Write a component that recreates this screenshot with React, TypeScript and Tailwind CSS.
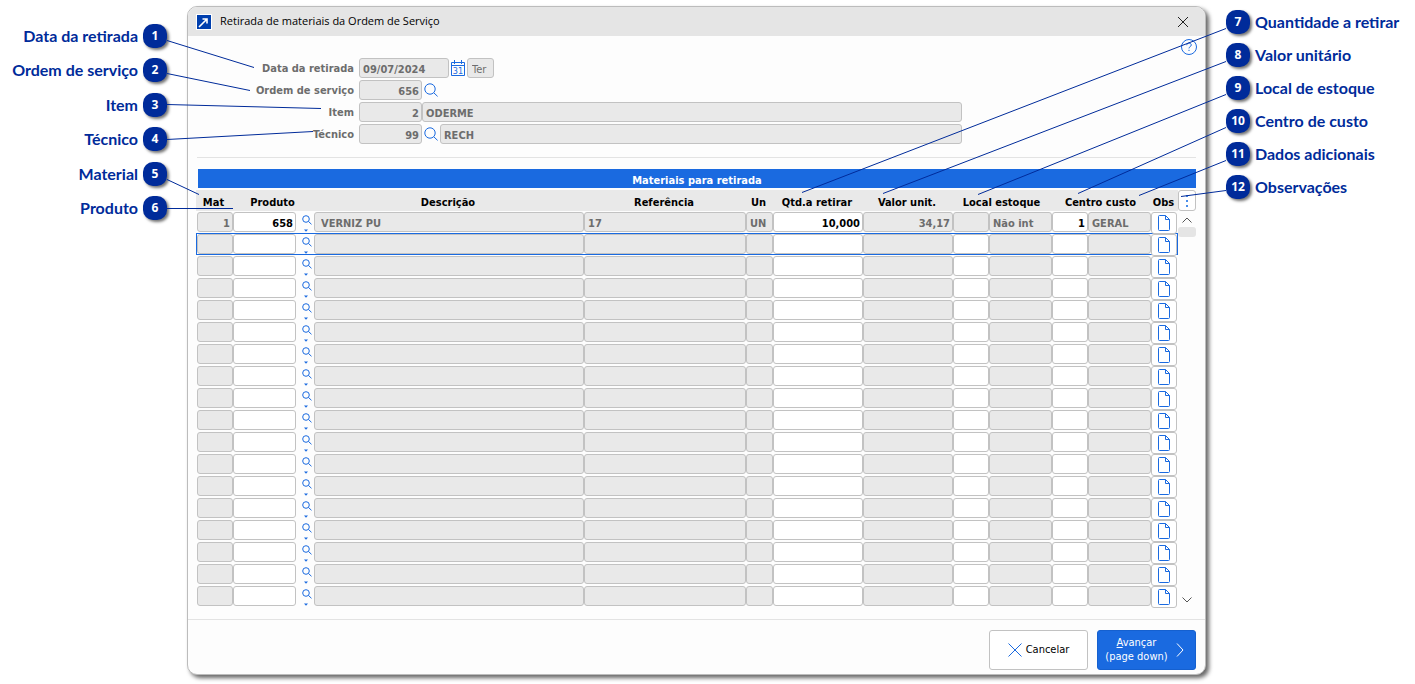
import { useState } from "react";
import clsx from "clsx";

type Align = "left" | "right";

interface Column {
  key: string;
  label: string;
  align: Align;
  readOnly: boolean;
}

interface Callout {
  n: number;
  label: string;
}

const COLUMNS: Column[] = [
  { key: "mat", label: "Mat", align: "right", readOnly: true },
  { key: "produto", label: "Produto", align: "right", readOnly: false },
  { key: "descricao", label: "Descrição", align: "left", readOnly: true },
  { key: "referencia", label: "Referência", align: "left", readOnly: true },
  { key: "un", label: "Un", align: "left", readOnly: true },
  { key: "qtd", label: "Qtd.a retirar", align: "right", readOnly: false },
  { key: "valor", label: "Valor unit.", align: "right", readOnly: true },
  { key: "local", label: "Local estoque", align: "right", readOnly: false },
  { key: "localNome", label: "Nome do local", align: "left", readOnly: true },
  { key: "centro", label: "Centro custo", align: "right", readOnly: false },
  { key: "centroNome", label: "Nome do centro", align: "left", readOnly: true },
];

const FIRST_ROW: Record<string, string> = {
  mat: "1",
  produto: "658",
  descricao: "VERNIZ PU",
  referencia: "17",
  un: "UN",
  qtd: "10,000",
  valor: "34,17",
  local: "",
  localNome: "Não int",
  centro: "1",
  centroNome: "GERAL",
};

const ROWS: Record<string, string>[] = [FIRST_ROW, ...Array.from({ length: 17 }, () => ({}))];

const LEFT: Callout[] = [
  { n: 1, label: "Data da retirada" },
  { n: 2, label: "Ordem de serviço" },
  { n: 3, label: "Item" },
  { n: 4, label: "Técnico" },
  { n: 5, label: "Material" },
  { n: 6, label: "Produto" },
];

const RIGHT: Callout[] = [
  { n: 7, label: "Quantidade a retirar" },
  { n: 8, label: "Valor unitário" },
  { n: 9, label: "Local de estoque" },
  { n: 10, label: "Centro de custo" },
  { n: 11, label: "Dados adicionais" },
  { n: 12, label: "Observações" },
];

// x1, y1, x2, y2 of each leader line
const LEADERS = [
  [167, 40, 254, 67],
  [167, 73, 250, 90],
  [167, 104, 321, 108],
  [167, 139, 313, 131],
  [167, 179, 199, 194],
  [167, 208, 233, 208],
  [1226, 28, 802, 192],
  [1226, 61, 883, 193],
  [1226, 94, 978, 194],
  [1226, 127, 1078, 193],
  [1226, 160, 1139, 195],
  [1226, 190, 1181, 196],
];

const FIELD = "h-5 rounded-[3px] border border-[#c2c2c2] pt-0.5 outline-none";
const GREY = "bg-[#e9e9e9] text-[#6d6d6d]";

function SearchIcon({ className }: { className?: string }) {
  return (
    <svg viewBox="0 0 14 14" className={className} fill="none" stroke="#1a6ae0">
      <circle cx="6" cy="6" r="5.2" />
      <path d="M9.8 9.8 13.6 13.4" />
    </svg>
  );
}

function Badge({ n }: { n: number }) {
  return (
    <span className="flex size-6 shrink-0 items-center justify-center rounded-[10px] bg-[#002b9a] font-['Open_Sans',sans-serif] text-xs font-bold text-white shadow-[2px_2px_3px_rgba(0,0,0,0.55)]">
      {n}
    </span>
  );
}

function FormRow({ id, label, children }: { id: string; label: string; children: React.ReactNode }) {
  return (
    <div className="flex h-5 items-center">
      <label htmlFor={id} className="w-[166px] pt-0.5 pr-[5px] text-right text-[#6d6d6d]">
        {label}
      </label>
      {children}
    </div>
  );
}

export default function App() {
  const [selected, setSelected] = useState(1);

  return (
    <div className="relative flex items-start overflow-hidden bg-white pt-1.5 pb-2 font-['DejaVu_Sans_Condensed','DejaVu_Sans',sans-serif] text-[11px] font-bold text-black">
      <ul className="mt-[18px] flex h-[196px] w-[187px] shrink-0 flex-col justify-between pr-5 font-['Lato',sans-serif] text-base text-[#002b9a]">
        {LEFT.map((c) => (
          <li key={c.n} className="flex h-6 items-center justify-end gap-[5px]">
            {c.label}
            <Badge n={c.n} />
          </li>
        ))}
      </ul>

      <main className="min-w-0 flex-1 rounded-[10px] border border-[#bcbcbc] bg-[#fdfdfd] shadow-[3px_3px_4px_rgba(0,0,0,0.6)]">
        <header className="flex h-[29px] items-center rounded-t-[9px] bg-[#e5e5e5] pl-2">
          <svg viewBox="0 0 16 16" className="size-4" fill="none">
            <rect width="16" height="16" fill="#fff" />
            <rect x="1" y="1" width="14" height="14" fill="#003fae" />
            <path d="M3 13 10.5 5.5M6.5 5H11V9.5" stroke="#fff" strokeWidth="1.6" />
          </svg>
          <h1 className="ml-2 flex-1 font-['Open_Sans',sans-serif] text-[11px] font-normal">
            Retirada de materiais da Ordem de Serviço
          </h1>
          <button type="button" aria-label="Fechar" className="mr-[15px] p-px">
            <svg viewBox="0 0 12 12" className="size-3" stroke="#222" fill="none">
              <path d="M1 1 11 11M11 1 1 11" />
            </svg>
          </button>
        </header>

        <form className="relative flex flex-col gap-0.5 pt-[22px] pl-[5px]">
          <button type="button" aria-label="Ajuda" className="absolute top-[3px] right-2">
            <svg viewBox="0 0 16 16" className="size-4" fill="none" stroke="#1a6ae0">
              <circle cx="8" cy="8" r="7.5" />
              <path d="M5.8 6.2C5.8 4.8 6.7 4.1 8 4.1S10.3 4.9 10.3 6C10.3 7.6 8 7.6 8 9.4" />
              <path d="M8 10.8V12" />
            </svg>
          </button>
          <FormRow id="data" label="Data da retirada">
            <input id="data" readOnly defaultValue="09/07/2024" className={clsx(FIELD, GREY, "w-[90px] pl-[3px]")} />
            <button type="button" aria-label="Abrir calendário" className="mx-0.5">
              <svg viewBox="0 0 14 16" className="h-4 w-3.5" fill="none" stroke="#1a6ae0">
                <path d="M.5 2.5H13.5V15.5H.5ZM.5 5.5H13.5M3.5 0V4M10.5 0V4" />
                <text x="7" y="14" textAnchor="middle" fontSize="9" fontWeight="400" fill="#1a6ae0" stroke="none">
                  31
                </text>
              </svg>
            </button>
            <input aria-label="Dia da semana" readOnly defaultValue="Ter" className={clsx(FIELD, GREY, "w-[27px] pl-1 font-normal")} />
          </FormRow>
          <FormRow id="ordem" label="Ordem de serviço">
            <input id="ordem" readOnly defaultValue="656" className={clsx(FIELD, GREY, "w-[63px] pr-0.5 text-right")} />
            <button type="button" aria-label="Pesquisar ordem" className="mx-0.5">
              <SearchIcon className="size-3.5" />
            </button>
          </FormRow>
          <FormRow id="item" label="Item">
            <input id="item" readOnly defaultValue="2" className={clsx(FIELD, GREY, "w-[63px] pr-0.5 text-right")} />
            <input aria-label="Nome do item" readOnly defaultValue="ODERME" className={clsx(FIELD, GREY, "mr-[243px] flex-1 pl-[3px]")} />
          </FormRow>
          <FormRow id="tecnico" label="Técnico">
            <input id="tecnico" readOnly defaultValue="99" className={clsx(FIELD, GREY, "w-[63px] pr-0.5 text-right")} />
            <button type="button" aria-label="Pesquisar técnico" className="mx-0.5">
              <SearchIcon className="size-3.5" />
            </button>
            <input aria-label="Nome do técnico" readOnly defaultValue="RECH" className={clsx(FIELD, GREY, "mr-[243px] flex-1 pl-[3px]")} />
          </FormRow>
        </form>

        <section className="pr-[9px] pl-2">
          <hr className="mt-[13px] mb-[11px] ml-px border-[#e3e3e3]" />
          <h2 className="ml-0.5 h-[19px] bg-[#1a6ae0] text-center leading-6 text-white">Materiais para retirada</h2>

          <div className="mt-0.5 flex">
            <table className="w-full min-w-0 flex-1 table-fixed border-collapse">
              <colgroup>
                <col className="w-[37px]" />
                <col className="w-[63px]" />
                <col className="w-[18px]" />
                <col />
                <col className="w-[162px]" />
                <col className="w-[27px]" />
                <col className="w-[90px]" />
                <col className="w-[90px]" />
                <col className="w-9" />
                <col className="w-[63px]" />
                <col className="w-9" />
                <col className="w-[63px]" />
                <col className="w-[27px]" />
              </colgroup>
              <thead>
                <tr className="h-[21px] bg-[#e9e9e9] leading-4">
                  <th className="p-0 pt-1 pr-0.5">Mat</th>
                  <th className="p-0 pt-1 pr-0.5" colSpan={2}>Produto</th>
                  <th className="p-0 pt-1 pr-0.5">Descrição</th>
                  <th className="p-0 pt-1 pr-0.5">Referência</th>
                  <th className="p-0 pt-1 pr-0.5">Un</th>
                  <th className="p-0 pt-1 pr-0.5">Qtd.a retirar</th>
                  <th className="p-0 pt-1 pr-0.5">Valor unit.</th>
                  <th className="p-0 pt-1 pr-0.5" colSpan={2}>Local estoque</th>
                  <th className="p-0 pt-1 pr-0.5" colSpan={2}>Centro custo</th>
                  <th className="p-0 pt-1 pr-0.5">Obs</th>
                </tr>
              </thead>
              <tbody>
                {ROWS.map((row, i) => (
                  <tr
                    key={i}
                    onClick={() => setSelected(i)}
                    className={clsx("h-[22px]", selected === i && "outline-1 -outline-offset-1 outline-[#1a6ae0]")}
                  >
                    {COLUMNS.map((c) => {
                      const locked = c.readOnly || (i === 0 && c.key === "local");
                      const cell = (
                        <td key={c.key} className={clsx("py-px pr-0 align-top", c.key === "mat" ? "pl-px" : "pl-0")}>
                          <input
                            aria-label={`${c.label} ${i + 1}`}
                            readOnly={locked}
                            defaultValue={row[c.key]}
                            className={clsx(
                              FIELD,
                              "block w-full",
                              locked ? GREY : "bg-white text-black",
                              c.align === "right" && "pr-0.5 text-right",
                              c.align === "left" && (c.key === "descricao" ? "pl-1.5" : "pl-[3px]"),
                            )}
                          />
                        </td>
                      );
                      if (c.key !== "produto") return cell;
                      return [
                        cell,
                        <td key="busca" className="p-0 align-top">
                          <button type="button" aria-label={`Pesquisar produto ${i + 1}`} className="block h-[22px] w-full pt-0.5 pl-1.5">
                            <svg viewBox="0 0 10 17" className="h-[17px] w-2.5" fill="none" stroke="#1a6ae0">
                              <circle cx="4" cy="4" r="3.3" />
                              <path d="M6.5 6.5 9.5 9.3" />
                              <path d="M2 14.5H6L4 16.7Z" fill="#1a6ae0" stroke="none" />
                            </svg>
                          </button>
                        </td>,
                      ];
                    })}
                    <td className="p-0 align-top">
                      <button
                        type="button"
                        aria-label={`Observações ${i + 1}`}
                        className="relative mt-px -mb-px flex h-[22px] w-[26px] items-center justify-center rounded-[3px] border border-[#c2c2c2] bg-white"
                      >
                        <svg viewBox="0 0 12 16" className="h-4 w-3" fill="none" stroke="#1a6ae0">
                          <path d="M1.5.5H7.5L11.5 4.5V14.5Q11.5 15.5 10.5 15.5H1.5Q.5 15.5.5 14.5V1.5Q.5.5 1.5.5ZM7.5.5V4.5H11.5" />
                        </svg>
                      </button>
                    </td>
                  </tr>
                ))}
              </tbody>
            </table>

            <div className="flex w-[18px] shrink-0 flex-col items-center">
              <button type="button" aria-label="Mais opções" className="flex h-[21px] w-full items-center justify-center rounded-[3px] border border-[#c2c2c2] bg-white">
                <svg viewBox="0 0 2 12" className="h-3 w-0.5" fill="#4a8eea">
                  <path d="M0 0H2V2H0ZM0 5H2V7H0ZM0 10H2V12H0Z" />
                </svg>
              </button>
              <button type="button" aria-label="Rolar para cima" className="mt-1.5">
                <svg viewBox="0 0 10 6" className="block h-1.5 w-2.5" fill="none" stroke="#555">
                  <path d="M.5 5.5 5 1 9.5 5.5" />
                </svg>
              </button>
              <div className="mt-1 h-2.5 w-full rounded-[3px] bg-[#e5e5e5]" />
              <button type="button" aria-label="Rolar para baixo" className="mt-auto mb-1">
                <svg viewBox="0 0 10 6" className="block h-1.5 w-2.5" fill="none" stroke="#555">
                  <path d="M.5.5 5 5 9.5.5" />
                </svg>
              </button>
            </div>
          </div>
        </section>

        <footer className="mt-3 flex justify-end gap-[9px] border-t border-[#e3e3e3] pt-2.5 pr-[9px] pb-1 font-normal">
          <button type="button" className="flex h-10 w-[99px] items-center justify-center gap-1 rounded-[3px] border border-[#c2c2c2] bg-white">
            <svg viewBox="0 0 14 14" className="size-3.5" stroke="#1a6ae0">
              <path d="M.5.5 13.5 13.5M13.5.5.5 13.5" />
            </svg>
            Cancelar
          </button>
          <button type="button" className="flex h-10 w-[99px] items-center justify-center gap-2 rounded-[3px] border border-[#1560cf] bg-[#1a6ae0] pr-1 leading-[14px] text-white">
            <span>
              <u>A</u>vançar
              <br />
              (page down)
            </span>
            <svg viewBox="0 0 8 14" className="h-3.5 w-2" fill="none" stroke="#fff">
              <path d="M1 .5 7 7 1 13.5" />
            </svg>
          </button>
        </footer>
      </main>

      <ul className="mt-1 flex w-[209px] shrink-0 flex-col gap-[9px] pl-5 font-['Lato',sans-serif] text-base text-[#002b9a]">
        {RIGHT.map((c) => (
          <li key={c.n} className="flex h-6 items-center gap-[5px] whitespace-nowrap">
            <Badge n={c.n} />
            {c.label}
          </li>
        ))}
      </ul>

      <svg viewBox="0 0 1415 684" className="pointer-events-none absolute top-0 left-0 h-[684px] w-[1415px]" stroke="#002b9a" strokeWidth="1">
        {LEADERS.map(([x1, y1, x2, y2]) => (
          <line key={`${x1}-${y1}`} x1={x1} y1={y1 + 0.5} x2={x2} y2={y2 + 0.5} />
        ))}
      </svg>
    </div>
  );
}
